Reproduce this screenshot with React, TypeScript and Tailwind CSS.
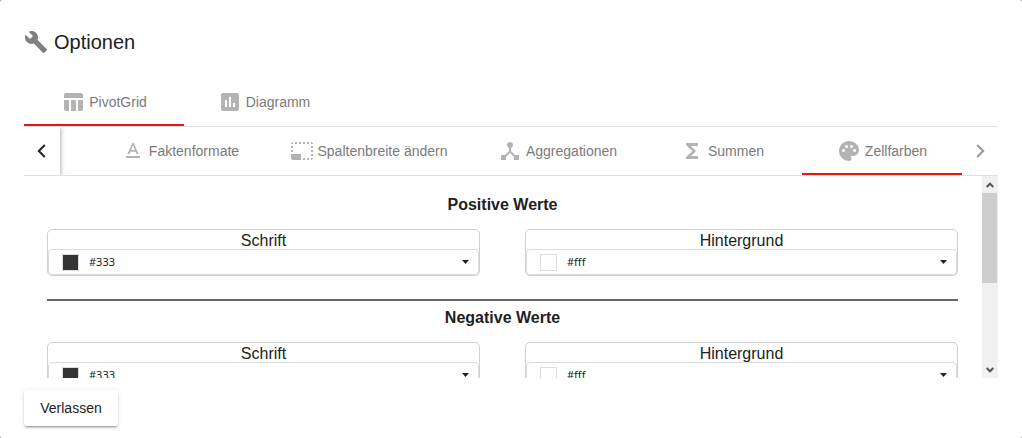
import React, { useState } from "react";
import type { IconType } from "react-icons";
import {
  MdAssessment,
  MdBuild,
  MdDeviceHub,
  MdFunctions,
  MdPalette,
  MdPhotoSizeSelectSmall,
  MdTableChart,
  MdTextFormat,
} from "react-icons/md";

type TabItem = { label: string; icon: IconType; width: string };

const mainTabs: TabItem[] = [
  { label: "PivotGrid", icon: MdTableChart, width: "min-w-40" },
  { label: "Diagramm", icon: MdAssessment, width: "min-w-40" },
];

const subTabs: TabItem[] = [
  { label: "Faktenformate", icon: MdTextFormat, width: "min-w-[168px]" },
  { label: "Spaltenbreite ändern", icon: MdPhotoSizeSelectSmall, width: "min-w-[209px]" },
  { label: "Aggregationen", icon: MdDeviceHub, width: "min-w-[169px]" },
  { label: "Summen", icon: MdFunctions, width: "min-w-40" },
  { label: "Zellfarben", icon: MdPalette, width: "min-w-40" },
];

function Tab({ item, active, onSelect }: { item: TabItem; active: boolean; onSelect: () => void }) {
  const Icon = item.icon;
  return (
    <button
      type="button"
      role="tab"
      aria-selected={active}
      onClick={onSelect}
      className={`flex h-12 ${item.width} shrink-0 items-center justify-center gap-1 whitespace-nowrap border-y-2 border-t-transparent px-6 text-sm text-[#7a7a7a] ${
        active ? "border-b-[#e1190f]" : "border-b-transparent"
      }`}
    >
      <Icon className="size-6 text-[#b3b3b3]" />
      {item.label}
    </button>
  );
}

function ColorField({ id, label, value }: { id: string; label: string; value: string }) {
  const [color, setColor] = useState(value);
  return (
    <div className="min-w-0 flex-1 rounded-[5px] border border-[#d0d0d0]">
      <label htmlFor={id} className="block h-[19px] text-center text-base leading-[22px]">
        {label}
      </label>
      <div className="relative flex h-[26px] items-center gap-2.5 rounded-[4px] border border-[#dcdcdc] pl-[13px]">
        <span className="size-[17px] shrink-0 border border-[#dcdcdc]" style={{ backgroundColor: color }} />
        <select
          id={id}
          value={color}
          onChange={(e) => setColor(e.target.value)}
          className="h-6 flex-1 appearance-none bg-transparent font-['Noto_Sans','Open_Sans',sans-serif] text-[11px] text-[#222] outline-none"
        >
          <option value="#333">#333</option>
          <option value="#fff">#fff</option>
        </select>
        <svg viewBox="0 0 7 4" className="pointer-events-none absolute right-[9px] h-1 w-[7px] fill-[#222]">
          <path d="M0 0h7L3.5 4z" />
        </svg>
      </div>
    </div>
  );
}

function ColorGroup({ id, title }: { id: string; title: string }) {
  return (
    <section className="flex flex-col gap-[15px]">
      <h3 className="text-center text-base leading-[19px] font-bold">{title}</h3>
      <div className="flex gap-[45px]">
        <ColorField id={`${id}-schrift`} label="Schrift" value="#333" />
        <ColorField id={`${id}-hintergrund`} label="Hintergrund" value="#fff" />
      </div>
    </section>
  );
}

function ScrollArrow({ label, d }: { label: string; d: string }) {
  return (
    <button type="button" aria-label={label} className="flex h-[17px] shrink-0 items-center justify-center pr-px">
      <svg viewBox="0 0 8 6" className="h-1.5 w-2 fill-none stroke-[#555] stroke-2">
        <path d={d} />
      </svg>
    </button>
  );
}

export default function App() {
  const [main, setMain] = useState(0);
  const [sub, setSub] = useState(4);
  return (
    <div className="h-screen bg-[#8a8a8a] font-['Liberation_Sans',Arial,sans-serif] text-[#212121]">
      <main className="flex h-full flex-col rounded-[2px] bg-white px-6 pt-[30px] pb-3">
        <h2 className="mb-6 flex h-6 items-center gap-1.5 text-xl">
          <MdBuild className="size-6 text-[#808080]" />
          Optionen
        </h2>
        <div role="tablist" className="flex shrink-0 border-b border-[#e0e0e0]">
          {mainTabs.map((t, i) => (
            <Tab key={t.label} item={t} active={i === main} onSelect={() => setMain(i)} />
          ))}
        </div>
        <div className="flex shrink-0 border-b border-[#e0e0e0]">
          <button
            type="button"
            aria-label="Zurück"
            className="z-10 flex w-9 shrink-0 items-center justify-center pr-0.5 shadow-[1px_1px_4px_rgba(0,0,0,0.3)] [clip-path:inset(0_-8px_0_0)]"
          >
            <svg viewBox="0 0 9 14" className="h-3.5 w-[9px] fill-none stroke-[#212121] stroke-2">
              <path d="M7.8 1 1.8 7l6 6" />
            </svg>
          </button>
          <div role="tablist" className="flex min-w-0 flex-1 justify-end overflow-hidden">
            {subTabs.map((t, i) => (
              <Tab key={t.label} item={t} active={i === sub} onSelect={() => setSub(i)} />
            ))}
          </div>
          <button type="button" aria-label="Weiter" className="flex w-9 shrink-0 items-center justify-center">
            <svg viewBox="0 0 9 14" className="h-3.5 w-[9px] fill-none stroke-[#999] stroke-2">
              <path d="M1.2 1l6 6-6 6" />
            </svg>
          </button>
        </div>
        <div className="flex min-h-0 flex-1">
          <div className="min-w-0 flex-1 overflow-hidden pt-[19px] pr-6 pl-[23px]">
            <ColorGroup id="positiv" title="Positive Werte" />
            <hr className="mt-[23px] mb-[7px] border-0 border-t-2 border-[#666]" />
            <ColorGroup id="negativ" title="Negative Werte" />
          </div>
          <div className="flex w-4 shrink-0 flex-col bg-[#f0f0f0]">
            <ScrollArrow label="Nach oben" d="M.7 5 4 1.7 7.3 5" />
            <div className="flex-1 pr-px">
              <div className="h-[90px] bg-[#cdcdcd]" />
            </div>
            <ScrollArrow label="Nach unten" d="M.7 1 4 4.3 7.3 1" />
          </div>
        </div>
        <button
          type="button"
          className="mt-3 h-9 min-w-[94px] shrink-0 self-start rounded-[3px] bg-white px-4 text-sm shadow-[0_3px_1px_-2px_rgba(0,0,0,0.2),0_2px_2px_0_rgba(0,0,0,0.14),0_1px_5px_0_rgba(0,0,0,0.12)]"
        >
          Verlassen
        </button>
      </main>
    </div>
  );
}
